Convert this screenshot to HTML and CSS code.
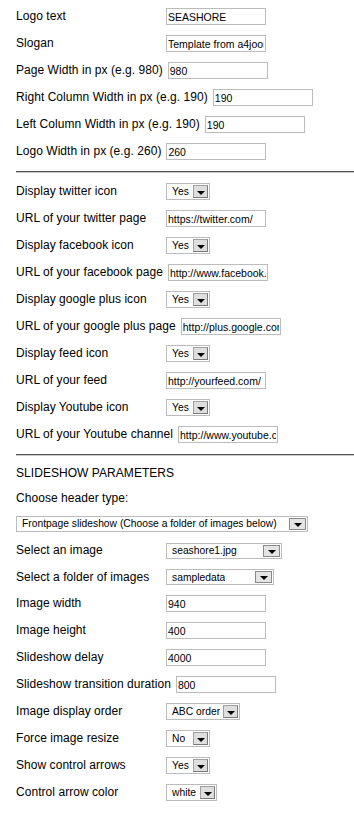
FILE: index.html
```html
<!DOCTYPE html>
<html>
<head>
<meta charset="utf-8">
<link rel="stylesheet" href="styles.css">
</head>
<body>
<div class="page">
  <div class="section">
    <div class="row"><label class="lbl">Logo text</label><input class="txt" value="SEASHORE"></div>
    <div class="row"><label class="lbl">Slogan</label><input class="txt" value="Template from a4joomla"></div>
    <div class="row"><label class="lbl">Page Width in px (e.g. 980)</label><input class="txt" value="980"></div>
    <div class="row"><label class="lbl">Right Column Width in px (e.g. 190)</label><input class="txt" value="190"></div>
    <div class="row"><label class="lbl">Left Column Width in px (e.g. 190)</label><input class="txt" value="190"></div>
    <div class="row"><label class="lbl">Logo Width in px (e.g. 260)</label><input class="txt" value="260"></div>
  </div>
  <hr class="sep">
  <div class="section">
    <div class="row"><label class="lbl">Display twitter icon</label><span class="sel w44"><span class="val">Yes</span><span class="btn"><i class="tri"></i></span></span></div>
    <div class="row"><label class="lbl">URL of your twitter page</label><input class="txt" value="https://twitter.com/"></div>
    <div class="row"><label class="lbl">Display facebook icon</label><span class="sel w44"><span class="val">Yes</span><span class="btn"><i class="tri"></i></span></span></div>
    <div class="row"><label class="lbl">URL of your facebook page</label><input class="txt" value="http://www.facebook.com/"></div>
    <div class="row"><label class="lbl">Display google plus icon</label><span class="sel w44"><span class="val">Yes</span><span class="btn"><i class="tri"></i></span></span></div>
    <div class="row"><label class="lbl">URL of your google plus page</label><input class="txt" value="http://plus.google.com/"></div>
    <div class="row"><label class="lbl">Display feed icon</label><span class="sel w44"><span class="val">Yes</span><span class="btn"><i class="tri"></i></span></span></div>
    <div class="row"><label class="lbl">URL of your feed</label><input class="txt" value="http://yourfeed.com/"></div>
    <div class="row"><label class="lbl">Display Youtube icon</label><span class="sel w44"><span class="val">Yes</span><span class="btn"><i class="tri"></i></span></span></div>
    <div class="row"><label class="lbl">URL of your Youtube channel</label><input class="txt" value="http://www.youtube.com/"></div>
  </div>
  <hr class="sep">
  <div class="section s3">
    <div class="row head"><span class="lbl">SLIDESHOW PARAMETERS</span></div>
    <div class="row choose"><span class="lbl">Choose header type:</span></div>
    <div class="row"><span class="sel big w292"><span class="val">Frontpage slideshow (Choose a folder of images below)</span><span class="btn"><i class="tri"></i></span></span></div>
    <div class="row"><label class="lbl">Select an image</label><span class="sel big w116"><span class="val">seashore1.jpg</span><span class="btn"><i class="tri"></i></span></span></div>
    <div class="row short"><label class="lbl">Select a folder of images</label><span class="sel big w108"><span class="val">sampledata</span><span class="btn"><i class="tri"></i></span></span></div>
    <div class="row"><label class="lbl">Image width</label><input class="txt" value="940"></div>
    <div class="row"><label class="lbl">Image height</label><input class="txt" value="400"></div>
    <div class="row"><label class="lbl">Slideshow delay</label><input class="txt" value="4000"></div>
    <div class="row"><label class="lbl">Slideshow transition duration</label><input class="txt" value="800"></div>
    <div class="row"><label class="lbl">Image display order</label><span class="sel w74"><span class="val">ABC order</span><span class="btn"><i class="tri"></i></span></span></div>
    <div class="row"><label class="lbl">Force image resize</label><span class="sel w44"><span class="val">No</span><span class="btn"><i class="tri"></i></span></span></div>
    <div class="row"><label class="lbl">Show control arrows</label><span class="sel w44"><span class="val">Yes</span><span class="btn"><i class="tri"></i></span></span></div>
    <div class="row"><label class="lbl">Control arrow color</label><span class="sel w51"><span class="val">white</span><span class="btn"><i class="tri"></i></span></span></div>
  </div>
</div>
</body>
</html>
```

FILE: styles.css
```css
html, body {
  margin: 0;
  padding: 0;
  background: #fff;
}

.page {
  padding: 8px 0 0 16px;
  font-family: "Liberation Sans", Arial, sans-serif;
  font-size: 12px;
  letter-spacing: 0.05px;
  color: #000;
}

.section {
  display: flex;
  flex-direction: column;
  gap: 10px;
}

.row {
  display: flex;
  align-items: center;
  height: 17px;
}

.row.short {
  height: 16px;
}

.lbl {
  flex: none;
  box-sizing: border-box;
  min-width: 150px;
  padding-right: 5px;
  line-height: 17px;
  white-space: nowrap;
}

.row.head {
  margin-top: -1px;
}

.row.choose {
  margin-top: -2px;
  margin-bottom: -2px;
}

.txt {
  box-sizing: border-box;
  width: 100px;
  height: 17px;
  margin: 0;
  padding: 0 1px;
  border: 1px solid #bcbcbc;
  font-family: "Liberation Sans", Arial, sans-serif;
  font-size: 10.5px;
  letter-spacing: 0;
  color: #000;
  background: #fff;
  outline: none;
}

.sel {
  box-sizing: border-box;
  display: inline-flex;
  align-items: center;
  justify-content: space-between;
  height: 17px;
  padding: 1px;
  border: 1px solid #bcbcbc;
  background: #fff;
  font-size: 10.3px;
  letter-spacing: 0;
}

.sel .val {
  padding-left: 4px;
  white-space: nowrap;
  overflow: hidden;
}

.sel .btn {
  flex: none;
  box-sizing: border-box;
  display: flex;
  align-items: center;
  justify-content: center;
  width: 15px;
  height: 13px;
  margin-left: 2px;
  border: 1px solid #7a7a7a;
  border-top-color: #a0a0a0;
  border-left-color: #a0a0a0;
  background: #dedede;
}

.sel .tri {
  display: block;
  width: 0;
  height: 0;
  margin-top: 2px;
  border-left: 4px solid transparent;
  border-right: 4px solid transparent;
  border-top: 4px solid #000;
}

.sel.big {
  height: 16px;
  padding: 0 1px 0 1px;
}

.sel.big .btn {
  width: 17px;
  height: 12px;
  border: 1px solid #8a8a8a;
  background: #e4e4e4;
}

.w44 { width: 44px; }
.w51 { width: 51px; }
.w74 { width: 74px; }
.w108 { width: 108px; }
.w116 { width: 116px; }
.w292 { width: 292px; }

.sep {
  height: 0;
  margin: 11px 0 10px 0;
  border: 0;
  border-top: 1px solid #555;
  border-bottom: 1px solid #c8c8c8;
}
```
